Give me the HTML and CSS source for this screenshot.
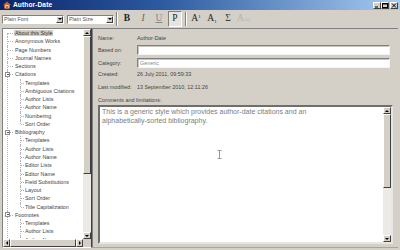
FILE: index.html
```html
<!DOCTYPE html>
<html>
<head>
<meta charset="utf-8">
<link rel="stylesheet" href="styles.css">
</head>
<body>
<div class="window">
  <div class="titlebar">
    <svg class="app-icon" width="8" height="8" viewBox="0 0 8 8"><polygon points="4,0.5 8,4 7,4 7,7.5 1,7.5 1,4 0,4" fill="#c8642a"/><rect x="2.5" y="4" width="3" height="3.5" fill="#fff"/><rect x="3.3" y="5" width="1.4" height="2.5" fill="#7a3410"/></svg>
    <span class="title">Author-Date</span>
    <div class="wbtns">
      <span class="wbtn"><svg width="6" height="5" viewBox="0 0 6 5"><rect x="1" y="3.5" width="3" height="1" fill="#000"/></svg></span>
      <span class="wbtn"><svg width="6" height="5" viewBox="0 0 6 5"><rect x="0.5" y="0.5" width="5" height="4" fill="none" stroke="#000" stroke-width="1"/><rect x="0.5" y="0.5" width="5" height="1" fill="#000"/></svg></span>
      <span class="wbtn close"><svg width="6" height="5" viewBox="0 0 6 5"><path d="M1 0.5 L5 4.5 M5 0.5 L1 4.5" stroke="#000" stroke-width="1"/></svg></span>
    </div>
  </div>
  <div class="toolbar">
    <div class="combo font"><span class="combo-text">Plain Font</span><span class="combo-btn"><i class="tri-down"></i></span></div>
    <div class="combo size"><span class="combo-text">Plain Size</span><span class="combo-btn"><i class="tri-down"></i></span></div>
    <div class="tsep"></div>
    <span class="tb bold">B</span>
    <span class="tb ital">I</span>
    <span class="tb under">U</span>
    <span class="tb plain pressed">P</span>
    <div class="tsep"></div>
    <span class="tb sup">A<span class="s-up">1</span></span>
    <span class="tb sub">A<span class="s-dn">1</span></span>
    <span class="tb sigma">Σ</span>
    <span class="tb sc off">A<small>AC</small></span>
  </div>
  <div class="main">
    <div class="tree">
      <div class="tree-body">
        <div class="tree-list">
          <ul class="root">
            <li><span class="lab sel">About this Style</span></li>
            <li><span class="lab">Anonymous Works</span></li>
            <li><span class="lab">Page Numbers</span></li>
            <li><span class="lab">Journal Names</span></li>
            <li><span class="lab">Sections</span></li>
            <li class="parent"><span class="exp"></span><span class="lab">Citations</span>
              <ul>
                <li><span class="lab">Templates</span></li>
                <li><span class="lab">Ambiguous Citations</span></li>
                <li><span class="lab">Author Lists</span></li>
                <li><span class="lab">Author Name</span></li>
                <li><span class="lab">Numbering</span></li>
                <li><span class="lab">Sort Order</span></li>
              </ul>
            </li>
            <li class="parent"><span class="exp"></span><span class="lab">Bibliography</span>
              <ul>
                <li><span class="lab">Templates</span></li>
                <li><span class="lab">Author Lists</span></li>
                <li><span class="lab">Author Name</span></li>
                <li><span class="lab">Editor Lists</span></li>
                <li><span class="lab">Editor Name</span></li>
                <li><span class="lab">Field Substitutions</span></li>
                <li><span class="lab">Layout</span></li>
                <li><span class="lab">Sort Order</span></li>
                <li><span class="lab">Title Capitalization</span></li>
              </ul>
            </li>
            <li class="parent open-end"><span class="exp"></span><span class="lab">Footnotes</span>
              <ul class="open-end">
                <li class="open-end"><span class="lab">Templates</span></li>
                <li class="open-end"><span class="lab">Author Lists</span></li>
                <li class="open-end"><span class="lab">Author Name</span></li>
              </ul>
            </li>
          </ul>
        </div>
        <div class="vscroll">
          <span class="sbtn"><i class="tri-up"></i></span>
          <span class="thumb tall"></span>
          <span class="track"></span>
          <span class="sbtn"><i class="tri-down"></i></span>
        </div>
      </div>
      <div class="hscroll">
        <span class="sbtn"><i class="tri-left"></i></span>
        <span class="hthumb"></span>
        <span class="htrack"></span>
        <span class="sbtn"><i class="tri-right"></i></span>
        <span class="corner"></span>
      </div>
    </div>
    <div class="panel">
      <div class="row r-name"><span class="lbl">Name:</span><span class="val">Author-Date</span></div>
      <div class="row r-based"><span class="lbl">Based on:</span><span class="field"></span></div>
      <div class="row r-cat"><span class="lbl">Category:</span><span class="field"><span class="ftext">Generic</span></span></div>
      <div class="row r-created"><span class="lbl">Created:</span><span class="val">26 July 2011, 09:59:33</span></div>
      <div class="row r-mod"><span class="lbl">Last modified:</span><span class="val">13 September 2010, 12:11:26</span></div>
      <div class="row r-com"><span class="lbl wide">Comments and limitations:</span></div>
      <div class="memo">
        <div class="memo-text">This is a generic style which provides author-date citations and an<br>alphabetically-sorted bibliography.</div>
        <div class="vscroll memo-sb">
          <span class="sbtn"><i class="tri-up"></i></span>
          <span class="thumb mthumb"></span>
          <span class="track"></span>
          <span class="sbtn"><i class="tri-down"></i></span>
        </div>
        <svg class="ibeam" width="5" height="9" viewBox="0 0 5 9"><path d="M0.5 0.5 H4.5 M2.5 0.5 V8.5 M0.5 8.5 H4.5" stroke="#9a9a9a" stroke-width="1"/></svg>
      </div>
    </div>
  </div>
</div>
</body>
</html>
```
FILE: styles.css
```css
* { box-sizing: border-box; margin: 0; padding: 0; }
html, body { width: 400px; height: 250px; overflow: hidden; }
body { background: #d4d0c8; font-family: "Liberation Sans", Arial, sans-serif; color: #333; }

.window { width: 400px; height: 250px; display: flex; flex-direction: column; background: #d4d0c8; }

/* title bar */
.titlebar { height: 10px; flex: none; display: flex; align-items: center; padding: 0 2px 0 3px;
  background: linear-gradient(to right, #0a246a 0%, #2c5aa0 40%, #a6caf0 100%); }
.app-icon { display: block; flex: none; }
.title { margin-left: 2px; font-size: 6.6px; font-weight: bold; color: #fff; line-height: 10px; letter-spacing: 0.1px; }
.wbtns { margin-left: auto; display: flex; gap: 0; align-items: center; }
.wbtn { width: 8px; height: 7px; display: flex; align-items: center; justify-content: center; background: #d4d0c8;
  border: 1px solid; border-color: #fff #404040 #404040 #fff; }
.wbtn svg { display: block; }
.wbtn.close { margin-left: 1px; }

/* toolbar */
.toolbar { height: 18px; flex: none; display: flex; align-items: center; padding: 0 2px; }
.combo { height: 9px; display: flex; align-items: stretch; background: #fff; border: 1px solid; border-color: #808080 #fff #fff #808080; }
.combo.font { width: 62px; }
.combo.size { width: 47px; margin-left: 3px; }
.combo-text { flex: 1; font-size: 5.4px; line-height: 7px; color: #555; padding-left: 1px; white-space: nowrap; overflow: hidden; }
.combo-btn { width: 7px; display: flex; align-items: center; justify-content: center; background: #d4d0c8;
  border: 1px solid; border-color: #fff #404040 #404040 #fff; }
.tsep { width: 2px; height: 14px; border-left: 1px solid #808080; border-right: 1px solid #fff; margin: 0 1px 0 2px; }
.tb { width: 16px; height: 16px; display: flex; align-items: center; justify-content: center;
  font-family: "Liberation Serif", "Times New Roman", serif; font-size: 9.5px; color: #222; line-height: 1; }
.tb.bold { font-weight: bold; }
.tb.ital { font-style: italic; color: #666; }
.tb.under { text-decoration: underline; color: #888; }
.tb.pressed { width: 14px; margin: 0 1px; background: #e6e4e0; border: 1px solid; border-color: #808080 #fff #fff #808080; }
.s-up, .s-dn { font-size: 5px; position: relative; }
.s-up { top: -3px; }
.s-dn { top: 2px; }
.tb.sigma { color: #444; }
.tb.off { color: #b4b2ae; }
.tb small { font-size: 5px; }

/* main */
.main { flex: 1; display: flex; padding: 0 0 2px 2px; min-height: 0; }

.tree { width: 90px; flex: none; display: flex; flex-direction: column; background: #fff;
  border: 1px solid; border-color: #808080 #404040 #fff #808080; }
.tree-body { flex: 1; display: flex; min-height: 0; }
.tree-list { flex: 1; overflow: hidden; padding-top: 0; }
.tree ul { list-style: none; }
.root { margin-left: 4px; }
.tree li { position: relative; padding-left: 7px; font-size: 5.4px; line-height: 8.27px; white-space: nowrap; color: #444; }
.tree li::before { content: ""; position: absolute; left: 0; top: 0; bottom: 0; border-left: 1px dotted #b4b4b4; }
.tree li:last-child:not(.open-end)::before { bottom: auto; height: 4px; }
.tree li::after { content: ""; position: absolute; left: 1px; top: 4px; width: 5px; border-top: 1px dotted #b4b4b4; }
.root > li:first-child::before { top: 4px; }
.tree li ul { margin-left: 6px; }
.tree li li { padding-left: 4px; }
.tree li li::after { width: 3px; }
.lab { padding: 0 1px; }
.lab.sel { background: #d0cdc6; color: #333; }
.exp { position: absolute; left: -2px; top: 1.5px; width: 5px; height: 5px; background: #fff; border: 1px solid #8c8c8c; z-index: 1; }
.exp::after { content: ""; position: absolute; left: 0.5px; top: 1px; width: 2px; border-top: 1px solid #555; }

/* scrollbars */
.vscroll { width: 8px; flex: none; display: flex; flex-direction: column; background: #d4d0c8; }
.sbtn { width: 8px; height: 7px; flex: none; display: flex; align-items: center; justify-content: center; background: #d4d0c8;
  border: 1px solid; border-color: #fff #404040 #404040 #fff; }
.thumb { flex: none; background: #d4d0c8; border: 1px solid; border-color: #fff #404040 #404040 #fff; }
.thumb.tall { height: 138px; }
.track { flex: 1; background: #ebeae6; }
.hscroll { height: 8px; flex: none; display: flex; background: #d4d0c8; }
.hscroll .sbtn { width: 7px; height: 8px; }
.hthumb { width: 66px; flex: none; border: 1px solid; border-color: #fff #404040 #404040 #fff; }
.htrack { flex: 1; background: #ebeae6; }
.corner { width: 8px; flex: none; background: #d4d0c8; }

.tri-up, .tri-down, .tri-left, .tri-right { display: block; width: 0; height: 0; border: 2px solid transparent; }
.tri-up { border-bottom-color: #000; border-top-width: 0; }
.tri-down { border-top-color: #000; border-bottom-width: 0; }
.tri-left { border-right-color: #000; border-left-width: 0; }
.tri-right { border-left-color: #000; border-right-width: 0; }

/* panel */
.panel { flex: 1; display: flex; flex-direction: column; padding: 0 5px 3px 5px; margin-right: 2px;
  border-top: 1px solid #808080; border-left: 1px solid #808080; border-bottom: 1px solid #a8a6a0; }
.row { display: flex; align-items: center; flex: none; }
.lbl { width: 39px; flex: none; font-size: 5.4px; color: #444; white-space: nowrap; }
.lbl.wide { width: auto; }
.val { font-size: 5.4px; color: #444; white-space: nowrap; }
.r-name { height: 9px; margin-top: 4px; }
.r-based { height: 10px; margin-top: 3px; }
.r-cat { height: 10px; margin-top: 3px; }
.r-created { height: 9px; margin-top: 1.5px; }
.r-mod { height: 9px; margin-top: 4px; }
.r-com { height: 9px; margin-top: 4px; }
.field { flex: 1; height: 10px; margin-right: 3px; display: flex; align-items: center; background: #fff;
  border: 1px solid; border-color: #808080 #f4f4f4 #f4f4f4 #808080; box-shadow: inset 1px 1px 0 #c8c6c0; }
.ftext { font-size: 5.4px; color: #8a8a8a; padding-left: 2px; }

.memo { position: relative; flex: 1; margin-top: 0.5px; display: flex; background: #fff;
  border: 2px solid; border-color: #6e6e6e #e8e6e2 #e8e6e2 #6e6e6e; }
.memo-text { flex: 1; padding: 1px 2px; font-size: 7px; line-height: 8.5px; color: #7c7c7c; white-space: nowrap; overflow: hidden; }
.memo-sb .thumb.mthumb { height: 74px; }
.ibeam { position: absolute; left: 117px; top: 43px; display: block; }
```
